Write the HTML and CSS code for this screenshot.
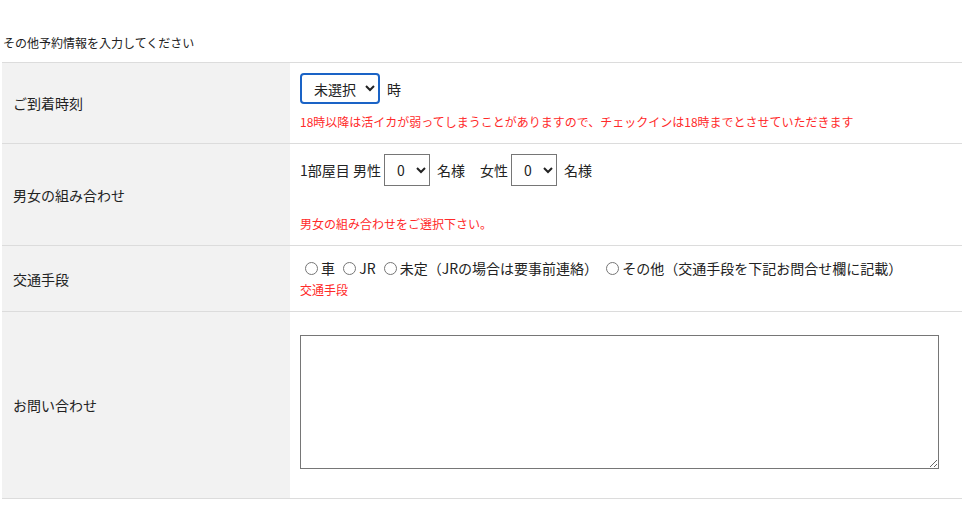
FILE: index.html
```html
<!DOCTYPE html>
<html lang="ja">
<head>
<meta charset="utf-8">
<link rel="stylesheet" href="styles.css">
</head>
<body>
<div class="page">
  <p class="title">その他予約情報を入力してください</p>
  <table class="form-table">
    <tr class="row-arrival">
      <th>ご到着時刻</th>
      <td>
        <div class="line">
          <select class="sel sel-time focused"><option>未選択</option></select>
          <span class="unit">時</span>
        </div>
        <p class="note note-arrival">18時以降は活イカが弱ってしまうことがありますので、チェックインは18時までとさせていただきます</p>
      </td>
    </tr>
    <tr class="row-guests">
      <th>男女の組み合わせ</th>
      <td>
        <div class="line">
          <span>1部屋目 男性</span>
          <select class="sel sel-num"><option>0</option></select>
          <span class="unit">名様</span>
          <span class="female">女性</span>
          <select class="sel sel-num"><option>0</option></select>
          <span class="unit">名様</span>
        </div>
        <p class="note note-guests">男女の組み合わせをご選択下さい。</p>
      </td>
    </tr>
    <tr class="row-transport">
      <th>交通手段</th>
      <td>
        <div class="radios">
          <label><input type="radio" name="t">車</label>
          <label><input type="radio" name="t">JR</label>
          <label><input type="radio" name="t">未定（JRの場合は要事前連絡）</label>
          <label><input type="radio" name="t">その他（交通手段を下記お問合せ欄に記載）</label>
        </div>
        <p class="note note-transport">交通手段</p>
      </td>
    </tr>
    <tr class="row-inquiry">
      <th>お問い合わせ</th>
      <td><textarea class="inquiry"></textarea></td>
    </tr>
  </table>
</div>
</body>
</html>
```

FILE: styles.css
```css
* { box-sizing: border-box; }
html, body { margin: 0; padding: 0; background: #fff; }
body {
  font-family: "Noto Sans CJK JP", "Noto Sans", sans-serif;
  color: #222;
}
.page { padding: 34px 0 0 2px; }
.title {
  margin: 0 0 10px 1px;
  font-size: 12px;
  line-height: 18px;
  color: #222;
}
.form-table {
  width: 960px;
  border-collapse: collapse;
  border-top: 1px solid #dcdcdc;
}
.form-table tr { border-bottom: 1px solid #dcdcdc; }
.form-table th {
  width: 288px;
  background: #f2f2f2;
  text-align: left;
  font-weight: normal;
  font-size: 14px;
  padding: 0 0 0 11px;
  vertical-align: middle;
  color: #222;
}
.form-table td {
  padding: 10px 10px 12px 10px;
  vertical-align: top;
  font-size: 14px;
}
.line {
  display: flex;
  align-items: center;
  height: 31px;
  white-space: nowrap;
}
.row-guests .line { height: 32px; }
.sel {
  font-family: inherit;
  font-size: 14px;
  color: #222;
  background: #fff;
  border: 1px solid #767676;
  border-radius: 0;
  height: 32px;
  padding: 0 2px 0 8px;
  margin: 0 4px 0 3px;
}
.sel-time {
  width: 80px;
  height: 31px;
  margin-left: 0;
  padding-left: 8px;
  border-radius: 3px;
}
.focused {
  border: 2px solid #1a63c6;
  border-radius: 4px;
}
.sel-num { width: 46px; padding-left: 8px; }
.unit { margin-left: 3px; }
.female { margin-left: 15px; }
.note {
  margin: 0;
  font-size: 12px;
  line-height: 18px;
  color: #ff2a2a;
}
.note-arrival { margin-top: 9px; }
.note-guests { margin-top: 29px; }
.radios {
  line-height: 24px;
  height: 24px;
  white-space: nowrap;
}
.radios label { margin-right: 0; }
.radios input { margin: 0 3px 0 5px; vertical-align: -1px; }
.note-transport { margin-top: 1px; }
.row-transport td { padding-bottom: 12px; }
.row-inquiry td { padding: 23px 10px 29px 10px; }
.inquiry {
  display: block;
  width: 639px;
  height: 134px;
  border: 1px solid #767676;
  font-family: inherit;
}
```
